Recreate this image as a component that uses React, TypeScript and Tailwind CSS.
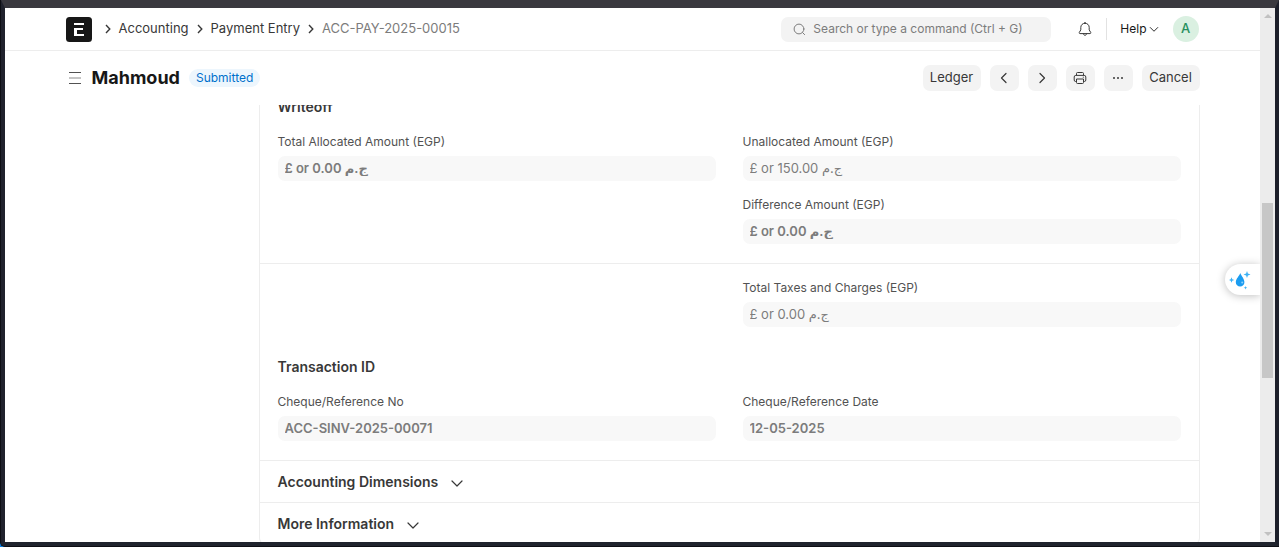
import React, { useId } from "react";

type ChevronProps = { direction: "left" | "right" | "down"; className?: string };

const chevronPaths = {
  left: "M10 3.5 5.5 8l4.5 4.5",
  right: "M6 3.5 10.5 8 6 12.5",
  down: "M3 6l5 5 5-5",
};

function Chevron({ direction, className = "" }: ChevronProps) {
  return (
    <svg viewBox="0 0 16 16" fill="none" stroke="currentColor" strokeWidth="1.2" strokeLinecap="round" strokeLinejoin="round" className={`shrink-0 ${className}`} aria-hidden="true">
      <path d={chevronPaths[direction]} />
    </svg>
  );
}

function Crumb({ children, current = false }: { children: React.ReactNode; current?: boolean }) {
  return (
    <li className="flex items-center gap-2">
      <svg viewBox="0 0 6 10" fill="none" stroke="#383838" strokeWidth="1.4" className="h-[10px] w-[6px] shrink-0" aria-hidden="true">
        <path d="M1 1l3.8 4L1 9" />
      </svg>
      {current ? (
        <span className="text-[#7c7c7c]">{children}</span>
      ) : (
        <a href="#" className="text-[#383838]">{children}</a>
      )}
    </li>
  );
}

function Field({ label, value, bold = false }: { label: string; value: string; bold?: boolean }) {
  const id = useId();
  return (
    <div className="flex flex-col gap-[6px] pt-px">
      <label htmlFor={id} className="text-xs leading-4 text-[#525252]">{label}</label>
      <input
        id={id}
        readOnly
        value={value}
        className={`h-[25px] w-full rounded-[7px] bg-[#f8f8f8] px-[7px] pb-[2px] text-[13px] text-[#7c7c7c] outline-none ${bold ? "font-semibold" : ""}`}
      />
    </div>
  );
}

function Columns({ children }: { children: React.ReactNode }) {
  return <div className="grid grid-cols-2 gap-x-[27px]">{children}</div>;
}

function SectionTitle({ children }: { children: React.ReactNode }) {
  return <h2 className="mb-4 text-sm leading-5 font-semibold text-[#383838]">{children}</h2>;
}

function CollapsedSection({ title }: { title: string }) {
  return (
    <section className="border-t border-[#ededed]">
      <h2>
        <button type="button" className="flex h-[41px] w-full items-center gap-[11px] px-[18px] text-sm leading-5 font-semibold text-[#383838]">
          {title}
          <Chevron direction="down" className="mt-[3px] size-[16px]" />
        </button>
      </h2>
    </section>
  );
}

function ActionButton({ children, label }: { children: React.ReactNode; label?: string }) {
  return (
    <button
      type="button"
      aria-label={label}
      className={`flex h-[26px] items-center justify-center rounded-[7px] bg-[#f3f3f3] text-[13px] text-[#383838] ${label ? "w-[29px]" : "w-[58px]"}`}
    >
      {children}
    </button>
  );
}

function Navbar() {
  return (
    <header className="border-b border-[#ededed]">
      <div className="mx-auto flex h-[42px] max-w-[1134px] items-center">
        <a href="#" aria-label="Home" className="mr-[13px]">
          <svg viewBox="0 0 26 25" className="h-[25px] w-[26px]" aria-hidden="true">
            <rect width="26" height="25" rx="3.5" fill="#171717" />
            <path d="M8 6h10v2H8zM8 11h9v2h-6v4h7v2H8z" fill="#fff" />
          </svg>
        </a>
        <nav aria-label="Breadcrumb">
          <ol className="flex items-center gap-2 text-[13px]">
            <Crumb>Accounting</Crumb>
            <Crumb>Payment Entry</Crumb>
            <Crumb current>ACC-PAY-2025-00015</Crumb>
          </ol>
        </nav>
        <label className="ml-auto flex h-[25px] w-[270px] items-center gap-[7px] rounded-[7px] bg-[#f3f3f3] pl-3 text-[#7c7c7c]">
          <svg viewBox="0 0 13 13" fill="none" stroke="#7c7c7c" strokeLinecap="round" className="size-[13px] shrink-0" aria-hidden="true">
            <circle cx="6" cy="6" r="4.9" />
            <path d="M9.6 9.6l2 2" />
          </svg>
          <input type="search" aria-label="Search" placeholder="Search or type a command (Ctrl + G)" className="w-full bg-transparent text-xs outline-none placeholder:text-[#7c7c7c]" />
        </label>
        <button type="button" aria-label="Notifications" className="ml-[27px]">
          <svg viewBox="0 0 14 16" fill="none" stroke="#383838" strokeWidth="1" strokeLinejoin="round" strokeLinecap="round" className="h-4 w-[14px]" aria-hidden="true">
            <path d="M7 2.2c-2.5 0-4.2 1.9-4.2 4.2v2.5L1.3 11.4c-.3.6 0 1.2.7 1.2h10c.7 0 1-.6.7-1.2l-1.5-2.5V6.4c0-2.3-1.7-4.2-4.2-4.2zM7 2.2V1.4M5.4 12.8c.2 1 .8 1.5 1.6 1.5s1.4-.5 1.6-1.5" />
          </svg>
        </button>
        <span className="mr-[13px] ml-[14px] h-[22px] w-px bg-[#e2e2e2]" />
        <button type="button" className="flex items-center gap-px text-xs text-[#171717]">
          Help
          <Chevron direction="down" className="size-[12px]" />
        </button>
        <button type="button" aria-label="Account" className="mr-px ml-[13px] flex size-[26px] items-center justify-center rounded-full bg-[#daf0e1] text-[13px] font-medium text-[#278f5e]">
          A
        </button>
      </div>
    </header>
  );
}

function PageHead() {
  return (
    <div className="mx-auto flex h-[54px] w-full max-w-[1134px] shrink-0 items-center">
      <button type="button" aria-label="Toggle sidebar" className="ml-[3px]">
        <svg viewBox="0 0 12 12" className="size-3" aria-hidden="true">
          <path d="M0 .5h12M0 11.5h12" stroke="#525252" />
          <path d="M0 6h12" stroke="#8a8a8a" />
        </svg>
      </button>
      <h1 className="ml-[11px] text-lg font-bold text-[#171717]">Mahmoud</h1>
      <span className="ml-[9px] rounded-full bg-[#edf6fd] px-[7px] py-px text-xs leading-4 text-[#0070cc]">Submitted</span>
      <div className="ml-auto flex gap-[9px]">
        <ActionButton>Ledger</ActionButton>
        <ActionButton label="Previous document">
          <Chevron direction="left" className="size-4" />
        </ActionButton>
        <ActionButton label="Next document">
          <Chevron direction="right" className="size-4" />
        </ActionButton>
        <ActionButton label="Print">
          <svg viewBox="0 0 14 14" fill="none" stroke="#383838" strokeLinejoin="round" className="size-[14px]" aria-hidden="true">
            <path d="M3.5 4.2V2.5a1 1 0 0 1 1-1h5a1 1 0 0 1 1 1v1.7M3.5 10.5H2.7A1.5 1.5 0 0 1 1.200 9V6a1.600 1.600 0 0 1 1.600-1.600h8.400A1.600 1.600 0 0 1 12.800 6v3a1.500 1.500 0 0 1-1.500 1.500h-.8M3.500 8h7v3.500a1 1 0 0 1-1 1h-5a1 1 0 0 1-1-1zM9.800 6.200h1" />
          </svg>
        </ActionButton>
        <ActionButton label="Menu">
          <svg viewBox="0 0 12 4" fill="#383838" className="h-1 w-3" aria-hidden="true">
            <circle cx="2" cy="2" r="1" />
            <circle cx="6" cy="2" r="1" />
            <circle cx="10" cy="2" r="1" />
          </svg>
        </ActionButton>
        <ActionButton>Cancel</ActionButton>
      </div>
    </div>
  );
}

function PaymentForm() {
  return (
    <form className="-mt-2 min-w-0 flex-1 self-start rounded-b-[7px] border-x border-b border-[#ededed]">
      <section className="px-[18px] pb-[19px]">
        <SectionTitle>Writeoff</SectionTitle>
        <Columns>
          <Field label="Total Allocated Amount (EGP)" value="£ or 0.00 ج.م" bold />
          <div className="flex flex-col gap-[15px]">
            <Field label="Unallocated Amount (EGP)" value="£ or 150.00 ج.م" />
            <Field label="Difference Amount (EGP)" value="£ or 0.00 ج.م" bold />
          </div>
        </Columns>
      </section>
      <section className="border-t border-[#ededed] px-[18px] py-[15px]">
        <Columns>
          <div className="col-start-2">
            <Field label="Total Taxes and Charges (EGP)" value="£ or 0.00 ج.م" />
          </div>
        </Columns>
      </section>
      <section className="px-[18px] pt-[15px] pb-[19px]">
        <SectionTitle>Transaction ID</SectionTitle>
        <Columns>
          <Field label="Cheque/Reference No" value="ACC-SINV-2025-00071" bold />
          <Field label="Cheque/Reference Date" value="12-05-2025" bold />
        </Columns>
      </section>
      <CollapsedSection title="Accounting Dimensions" />
      <CollapsedSection title="More Information" />
    </form>
  );
}

function Scrollbar() {
  return (
    <div className="flex w-[15px] shrink-0 flex-col items-center bg-[#ececec] py-[6px]" aria-hidden="true">
      <svg viewBox="0 0 8 4" className="h-1 w-2"><path d="M0 4l4-4 4 4z" fill="#c1c1c1" /></svg>
      <div className="flex w-full flex-1 flex-col items-center">
        <div className="grow-[185]" />
        <div className="w-[11px] grow-[175] bg-[#c7c7c7]" />
        <div className="grow-[154]" />
      </div>
      <svg viewBox="0 0 8 4" className="h-1 w-2"><path d="M0 0l4 4 4-4z" fill="#c1c1c1" /></svg>
    </div>
  );
}

function AssistantButton() {
  return (
    <button type="button" aria-label="Assistant" className="absolute top-[256px] right-0 flex h-[31px] w-[35px] items-center rounded-l-full bg-white pl-1 shadow-[0_1px_8px_rgba(0,0,0,0.25)]">
      <svg viewBox="0 0 22 20" className="h-5 w-[22px]" aria-hidden="true">
        <path d="M11.200 3c1 2.800 4.200 5.600 4.200 9.200a4.300 4.300 0 0 1-8.600 0c0-3.600 3.600-6 4.400-9.200z" fill="#1b9cf0" />
        <circle cx="13.200" cy="12.500" r="1" fill="#8ed0fa" />
        <path d="M18 1l.9 2.600 2.600.9-2.600.9-.9 2.600-.9-2.600-2.600-.9 2.600-.9zM2.500 7.200l.8 2 2 .8-2 .8-.8 2-.8-2-2-.8 2-.8zM16.500 16l.5 1.300 1.300.5-1.300.5-.5 1.200-.5-1.200-1.300-.5 1.300-.5z" fill="#3db2f5" />
      </svg>
    </button>
  );
}

export default function App() {
  return (
    <div className="h-screen bg-[#0b7fe0]">
      <div className="h-full overflow-hidden rounded-bl-[5px] border-b border-l border-[#0d0e14] bg-[#20222d]">
        <div className="flex h-full flex-col overflow-hidden border-t-8 border-r-4 border-b-4 border-l-4 border-t-[#3a393f] border-r-[#1c1f2a] border-b-[#20242e] border-l-[#20222d] font-[Inter,'DejaVu_Sans',sans-serif]">
          <div className="flex min-h-0 flex-1 bg-white">
            <div className="relative flex min-w-0 flex-1 flex-col overflow-hidden">
              <Navbar />
              <PageHead />
              <main className="min-h-0 flex-1 overflow-hidden">
                <div className="mx-auto flex max-w-[1134px] pl-[193px]">
                  <PaymentForm />
                </div>
              </main>
              <AssistantButton />
            </div>
            <Scrollbar />
          </div>
        </div>
      </div>
    </div>
  );
}
